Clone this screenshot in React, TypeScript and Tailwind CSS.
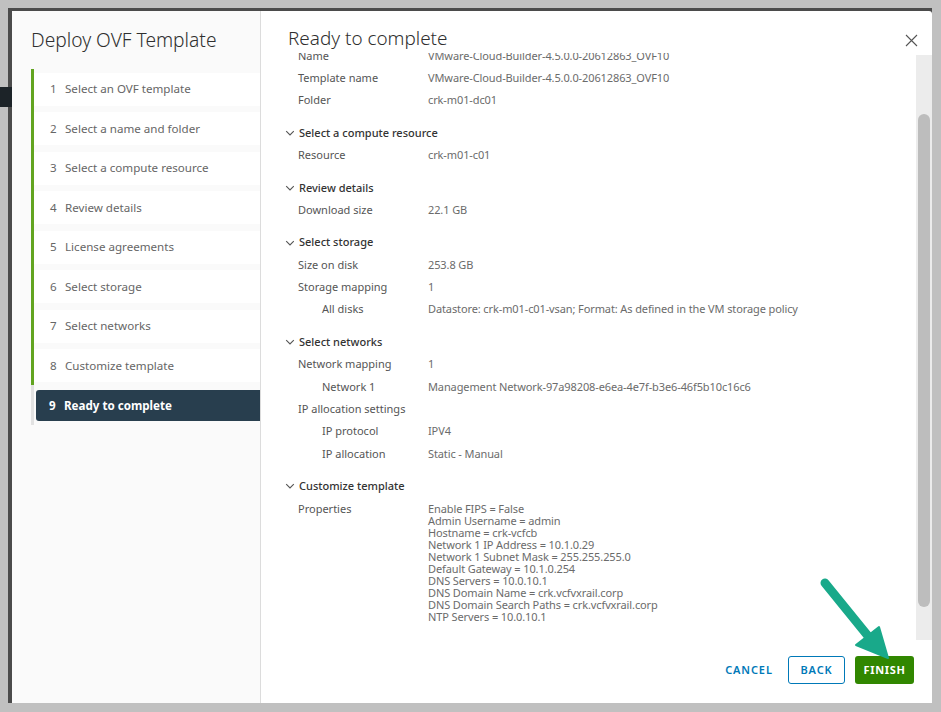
import React from "react";

const steps = [
  "Select an OVF template",
  "Select a name and folder",
  "Select a compute resource",
  "Review details",
  "License agreements",
  "Select storage",
  "Select networks",
  "Customize template",
];

type Row = { label: string; value?: string; indent?: boolean };
type Section = { title?: string; rows: Row[] };

const sections: Section[] = [
  {
    rows: [
      { label: "Name", value: "VMware-Cloud-Builder-4.5.0.0-20612863_OVF10" },
      { label: "Template name", value: "VMware-Cloud-Builder-4.5.0.0-20612863_OVF10" },
      { label: "Folder", value: "crk-m01-dc01" },
    ],
  },
  { title: "Select a compute resource", rows: [{ label: "Resource", value: "crk-m01-c01" }] },
  { title: "Review details", rows: [{ label: "Download size", value: "22.1 GB" }] },
  {
    title: "Select storage",
    rows: [
      { label: "Size on disk", value: "253.8 GB" },
      { label: "Storage mapping", value: "1" },
      {
        label: "All disks",
        value: "Datastore: crk-m01-c01-vsan; Format: As defined in the VM storage policy",
        indent: true,
      },
    ],
  },
  {
    title: "Select networks",
    rows: [
      { label: "Network mapping", value: "1" },
      { label: "Network 1", value: "Management Network-97a98208-e6ea-4e7f-b3e6-46f5b10c16c6", indent: true },
      { label: "IP allocation settings" },
      { label: "IP protocol", value: "IPV4", indent: true },
      { label: "IP allocation", value: "Static - Manual", indent: true },
    ],
  },
];

const properties = [
  "Enable FIPS = False",
  "Admin Username = admin",
  "Hostname = crk-vcfcb",
  "Network 1 IP Address = 10.1.0.29",
  "Network 1 Subnet Mask = 255.255.255.0",
  "Default Gateway = 10.1.0.254",
  "DNS Servers = 10.0.10.1",
  "DNS Domain Name = crk.vcfvxrail.corp",
  "DNS Domain Search Paths = crk.vcfvxrail.corp",
  "NTP Servers = 10.0.10.1",
];

function Chevron() {
  return (
    <svg width="10" height="10" viewBox="0 0 10 10" className="shrink-0">
      <path d="M1.2 3.2 L5 7 L8.8 3.2" fill="none" stroke="#555" strokeWidth="1.1" />
    </svg>
  );
}

function SectionHeader({ title }: { title: string }) {
  return (
    <div className="mt-[10px] flex h-[22.4px] items-center gap-[4px] pl-[24px] text-[11px] font-medium text-[#333]">
      <Chevron />
      <span>{title}</span>
    </div>
  );
}

function DetailRow({ row }: { row: Row }) {
  return (
    <div className="flex h-[22.4px] items-center text-[11px]">
      <span className={`${row.indent ? "pl-[61px]" : "pl-[37px]"} w-[167px] shrink-0 text-[#555]`}>{row.label}</span>
      <span className="whitespace-nowrap tracking-[-0.01em] text-[#6b6b6b]">{row.value}</span>
    </div>
  );
}

export default function App() {
  return (
    <div
      className="relative flex h-[712px] w-[941px] bg-[#c0c0c0] pb-[9px] pl-2 pr-[9px] pt-2"
      style={{ fontFamily: '"Noto Sans", sans-serif' }}
    >
      <div className="absolute left-0 top-[87px] h-[20px] w-[12px] bg-[#1c2328]" />
      <div className="flex flex-1 flex-col bg-[#4b4b4b] pl-[4px] pt-[3px]">
        <div className="flex flex-1 overflow-hidden rounded-tr-[3px] bg-white">
          {/* wizard steps */}
          <div className="flex w-[249px] shrink-0 flex-col border-r border-[#dcdcdc] bg-[#fafafa]">
            <div className="pl-[19px] pt-[17px] text-[19.2px] font-light leading-[24px] text-[#2f2f2f]">
              Deploy OVF Template
            </div>
            <div className="ml-[19px] mt-[17px]">
              <div className="flex flex-col gap-[6.5px] border-l-[3px] border-[#62a420] pb-[3px] pt-[3.5px]">
                {steps.map((s, i) => (
                  <div key={s} className="flex h-[33px] items-center bg-white pl-[16px] text-[11.6px] text-[#666]">
                    <span className="w-[15px]">{i + 1}</span>
                    <span>{s}</span>
                  </div>
                ))}
              </div>
              <div className="border-l-[3px] border-[#e2e2e2] pb-[4px] pl-[2px] pt-[5px]">
                <div className="flex h-[31px] items-center rounded-l-[3px] bg-[#283e4e] pl-[13px] text-[11.6px] font-bold text-white">
                  <span className="w-[15px]">9</span>
                  <span>Ready to complete</span>
                </div>
              </div>
            </div>
          </div>

          {/* review pane */}
          <div className="flex min-w-0 flex-1 flex-col">
            <div className="flex h-[42px] shrink-0 items-start justify-between pl-[27px] pr-[14px] pt-[15px]">
              <span className="text-[18.9px] font-light leading-[24px] text-[#2f2f2f]">Ready to complete</span>
              <svg width="13" height="13" viewBox="0 0 13 13" className="mt-[8px]">
                <path d="M1 1 L12 12 M12 1 L1 12" stroke="#555" strokeWidth="1.1" />
              </svg>
            </div>

            <div className="flex min-h-0 flex-1">
              <div className="min-w-0 flex-1 overflow-hidden">
                <div className="-mt-[8.4px]">
                  {sections.map((sec, i) => (
                    <div key={i}>
                      {sec.title && <SectionHeader title={sec.title} />}
                      {sec.rows.map((r) => (
                        <DetailRow key={r.label} row={r} />
                      ))}
                    </div>
                  ))}
                  <SectionHeader title="Customize template" />
                  <div className="flex pt-[5px] text-[11px] leading-[12px]">
                    <span className="w-[167px] shrink-0 pl-[37px] text-[#555]">Properties</span>
                    <div className="flex flex-col tracking-[-0.01em] text-[#6b6b6b]">
                      {properties.map((p) => (
                        <span key={p}>{p}</span>
                      ))}
                    </div>
                  </div>
                </div>
              </div>
              <div className="mt-[2px] flex w-[16px] shrink-0 flex-col bg-[#ececec] px-[2px] pt-[59px]">
                <div className="h-[493px] rounded-full bg-[#bdbdbd]" />
              </div>
            </div>

            <div className="flex h-[63px] shrink-0 items-start justify-end pr-[18px] pt-[16px]">
              <button className="h-[28px] w-[68px] text-[11px] font-semibold tracking-[0.08em] text-[#0079b8]">
                CANCEL
              </button>
              <button className="ml-[5px] h-[28px] w-[57px] rounded-[3px] border border-[#0079b8] text-[11px] font-semibold tracking-[0.08em] text-[#0079b8]">
                BACK
              </button>
              <button className="ml-[10px] h-[28px] w-[59px] rounded-[3px] bg-[#318700] text-[11px] font-bold tracking-[0.06em] text-white">
                FINISH
              </button>
            </div>
          </div>
        </div>
      </div>

      {/* annotation arrow */}
      <svg className="pointer-events-none absolute left-0 top-0" width="941" height="712">
        <line x1="825" y1="583" x2="868" y2="636" stroke="#19a98a" strokeWidth="9" strokeLinecap="round" />
        <polygon points="856,645 879,627 888,658" fill="#19a98a" stroke="#19a98a" strokeWidth="2" strokeLinejoin="round" />
      </svg>
    </div>
  );
}
